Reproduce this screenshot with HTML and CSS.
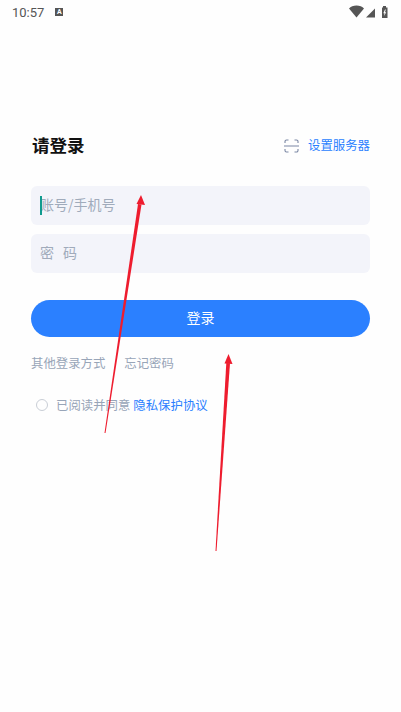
FILE: index.html
```html
<!DOCTYPE html>
<html lang="zh-CN">
<head>
  <meta charset="UTF-8">
  <meta name="viewport" content="width=device-width, initial-scale=1.0">
  <title>请登录</title>
  <link rel="stylesheet" href="styles.css">
</head>
<body>
  <div class="status-bar">
    <div class="status-left">
      <span class="clock">10:57</span>
      <span class="status-badge">A</span>
    </div>
    <svg class="status-icons" width="40" height="14" viewBox="0 0 40 14">
      <path d="M0 3.5C3-.4 12-.4 15 3.500L7.500 12.500Z" fill="#555"/>
      <path d="M17 12.500L26 3.500V12.500Z" fill="#555"/>
      <path d="M34 2.500V1h3V2.500h1.500V13h-5.500V2.500Z" fill="#555"/>
      <path d="M36 4.500L34.300 8.200h1.200L35 11l2.200-3.700h-1.200l.8-2.800Z" fill="#fff"/>
    </svg>
  </div>

  <main class="login">
    <div class="login-head">
      <h1 class="login-title">请登录</h1>
      <div class="server-link">
        <svg class="scan-icon" width="15" height="14" viewBox="0 0 15 14" fill="none" stroke="#7a86a3" stroke-width="1.100">
          <path d="M1 4V2.500A1.500 1.500 0 0 1 2.500 1H4.500M10.500 1h2A1.500 1.500 0 0 1 14 2.500V4M1 10v1.500A1.500 1.500 0 0 0 2.500 13H4.500M10.500 13h2a1.500 1.500 0 0 0 1.500-1.500V10M0 7h15"/>
        </svg>
        <span class="server-text">设置服务器</span>
      </div>
    </div>

    <div class="field field-active">
      <span class="caret"></span>
      <span class="placeholder">账号/手机号</span>
    </div>
    <div class="field">
      <span class="placeholder">密<span class="gap"></span>码</span>
    </div>

    <button class="login-btn">登录</button>

    <div class="login-links">
      <span>其他登录方式</span>
      <span>忘记密码</span>
    </div>

    <div class="agreement">
      <span class="radio"></span>
      <span class="agree-text">已阅读并同意</span>
      <span class="agree-link">隐私保护协议</span>
    </div>
  </main>

  <!-- red arrows drawn on top of the screenshot -->
  <svg class="arrows" width="401" height="712" viewBox="0 0 401 712">
    <path d="M104.500 433L138 204L141.500 204.500L105.500 433Z" fill="#ee1c2e"/>
    <path d="M141 195L145 205L136.500 204Z" fill="#ee1c2e"/>
    <path d="M215.500 551L226.300 363L230 363.200L216.500 551Z" fill="#ee1c2e"/>
    <path d="M228.500 354L232.500 364L224.500 363.500Z" fill="#ee1c2e"/>
  </svg>
</body>
</html>
```

FILE: styles.css
```css
/* Page */
body {
  margin: 0;
  width: 401px;
  height: 712px;
  overflow: hidden;
  position: relative;
  background: #fefefe;
  font-family: "Noto Sans CJK SC", "Roboto", sans-serif;
}

/* Status bar */
.status-bar {
  height: 24px;
  padding: 0 12px 0 12px;
  display: flex;
  justify-content: space-between;
  align-items: center;
}

.status-left {
  display: flex;
  align-items: center;
  gap: 11px;
}

.clock {
  font-family: "Roboto", sans-serif;
  font-size: 13px;
  color: #555;
}

.status-badge {
  width: 8px;
  height: 8px;
  background: #555;
  color: #fff;
  font-family: "Roboto", sans-serif;
  font-size: 7px;
  font-weight: 700;
  line-height: 8px;
  text-align: center;
}

.status-icons {
  display: block;
}

/* Login form */
.login {
  padding: 106px 31px 0;
}

.login-head {
  height: 28px;
  display: flex;
  justify-content: space-between;
  align-items: center;
  margin-bottom: 28px;
}

.login-title {
  margin: 0;
  padding: 2px 0 0 1px;
  font-size: 17.500px;
  font-weight: 700;
  line-height: 28px;
  color: #111;
}

.server-link {
  margin-top: 4px;
  display: flex;
  align-items: center;
  gap: 9px;
  font-size: 12.400px;
  color: #2a7fff;
}

.server-text {
  padding-bottom: 2px;
}

.field {
  height: 39px;
  margin-bottom: 9px;
  padding-left: 9px;
  box-sizing: border-box;
  padding-bottom: 4px;
  display: flex;
  align-items: center;
  position: relative;
  background: #f3f4fa;
  border-radius: 6px;
}

.caret {
  position: absolute;
  left: 9px;
  top: 10px;
  width: 2px;
  height: 19px;
  background: #0f9b8e;
}

.placeholder {
  font-size: 14px;
  color: #a0abbb;
}

.gap {
  display: inline-block;
  width: 9px;
}

.login-btn {
  display: block;
  width: 100%;
  height: 37px;
  margin-top: 27px;
  padding: 0 0 4px;
  border: none;
  border-radius: 19px;
  background: #2b80ff;
  color: #fff;
  font-family: inherit;
  font-size: 14px;
}

.login-links {
  margin-top: 16px;
  display: flex;
  gap: 19px;
  font-size: 12.400px;
  line-height: 20px;
  color: #98a5b8;
}

.agreement {
  margin-top: 22px;
  padding-left: 5px;
  display: flex;
  align-items: center;
  font-size: 12.400px;
  line-height: 20px;
}

.radio {
  width: 10px;
  height: 10px;
  margin-right: 8px;
  border: 1px solid #c9ced6;
  border-radius: 50%;
}

.agree-text {
  margin-right: 3px;
  color: #98a5b8;
}

.agree-link {
  color: #2a7fff;
}

/* Annotation layer */
.arrows {
  position: absolute;
  left: 0;
  top: 0;
}
```
